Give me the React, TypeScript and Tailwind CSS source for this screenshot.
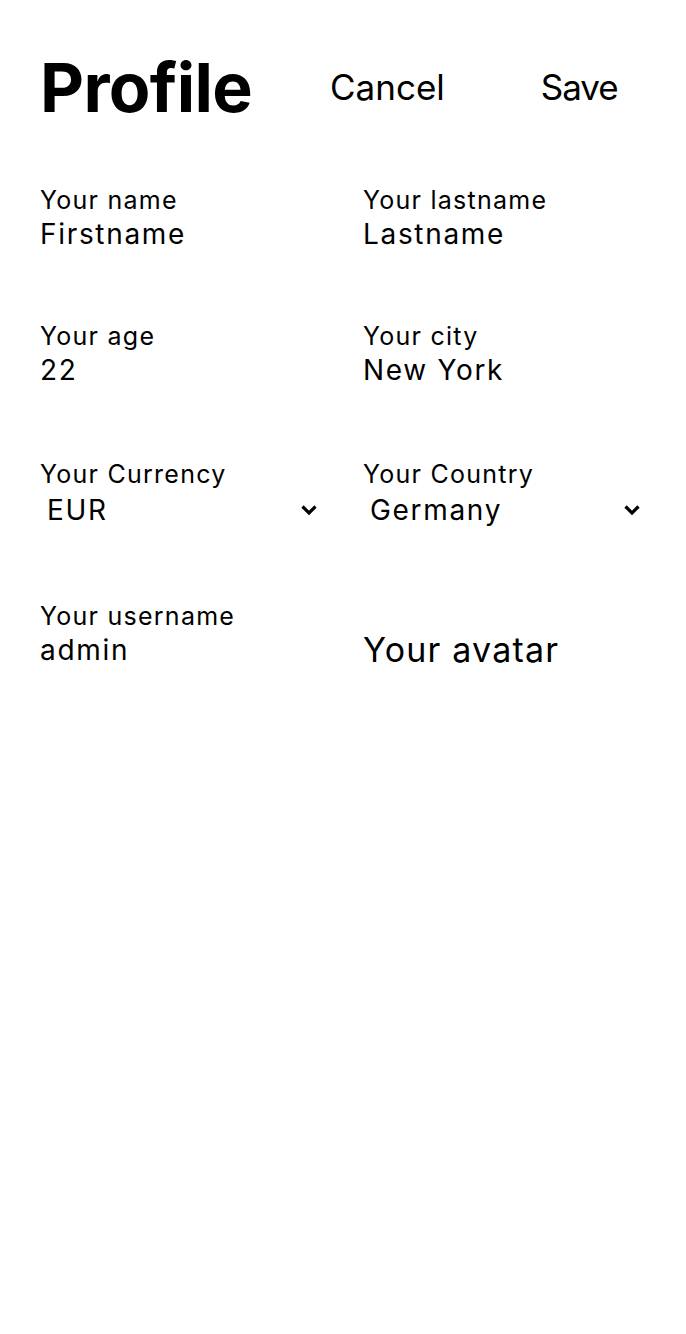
import { useState } from 'react';

type Field = {
  label: string;
  value: string;
};

function TextField({ label, value }: Field) {
  const [v, setV] = useState(value);
  return (
    <label className="flex flex-col">
      <span className="text-[25px] leading-[30px] tracking-wider">{label}</span>
      <input
        className="text-[28px] leading-[38px] tracking-[0.06em] outline-none w-full"
        value={v}
        onChange={(e) => setV(e.target.value)}
      />
    </label>
  );
}

function SelectField({ label, value, options }: Field & { options: string[] }) {
  const [v, setV] = useState(value);
  return (
    <label className="flex flex-col pt-[2px]">
      <span className="text-[25px] leading-[30px] tracking-wider">{label}</span>
      <div className="relative mt-[2px] mb-[4px]">
        <select
          className="appearance-none text-[28px] leading-[38px] tracking-[0.06em] outline-none w-full border-0 bg-transparent pl-[7px]"
          value={v}
          onChange={(e) => setV(e.target.value)}
        >
          {options.map((o) => (
            <option key={o}>{o}</option>
          ))}
        </select>
        {/* chevron */}
        <svg
          className="absolute right-[5px] top-1/2 -translate-y-1/2 pointer-events-none"
          width="18"
          height="12"
          viewBox="0 0 18 12"
          fill="none"
        >
          <path d="M2.5 2.5 9 9l6.5-6.5" stroke="black" strokeWidth="3.2" />
        </svg>
      </div>
    </label>
  );
}

export default function App() {
  return (
    <div
      className="min-h-[1334px] bg-white text-black px-10"
      style={{ fontFamily: 'Inter, "Noto Sans", sans-serif' }}
    >
      {/* Header */}
      <div className="flex items-center pt-[44px]">
        <h1 className="text-[68px] leading-[86px] font-bold tracking-[-0.01em]">Profile</h1>
        <button className="ml-[78px] text-[35px] leading-[44px]">Cancel</button>
        <button className="ml-[96px] text-[35px] leading-[44px] tracking-[-0.03em]">Save</button>
      </div>

      {/* Form */}
      <div className="grid grid-cols-2 gap-x-10 gap-y-[68px] mt-[55px]">
        <TextField label="Your name" value="Firstname" />
        <TextField label="Your lastname" value="Lastname" />
        <TextField label="Your age" value="22" />
        <TextField label="Your city" value="New York" />
        <SelectField label="Your Currency" value="EUR" options={['EUR', 'USD', 'GBP']} />
        <SelectField label="Your Country" value="Germany" options={['Germany', 'France', 'USA']} />
        <TextField label="Your username" value="admin" />
        <div className="flex flex-col justify-end">
          <label className="text-[34px] leading-[38px] tracking-[0.035em]">
            Your avatar
            <input type="file" className="hidden" />
          </label>
        </div>
      </div>
    </div>
  );
}
